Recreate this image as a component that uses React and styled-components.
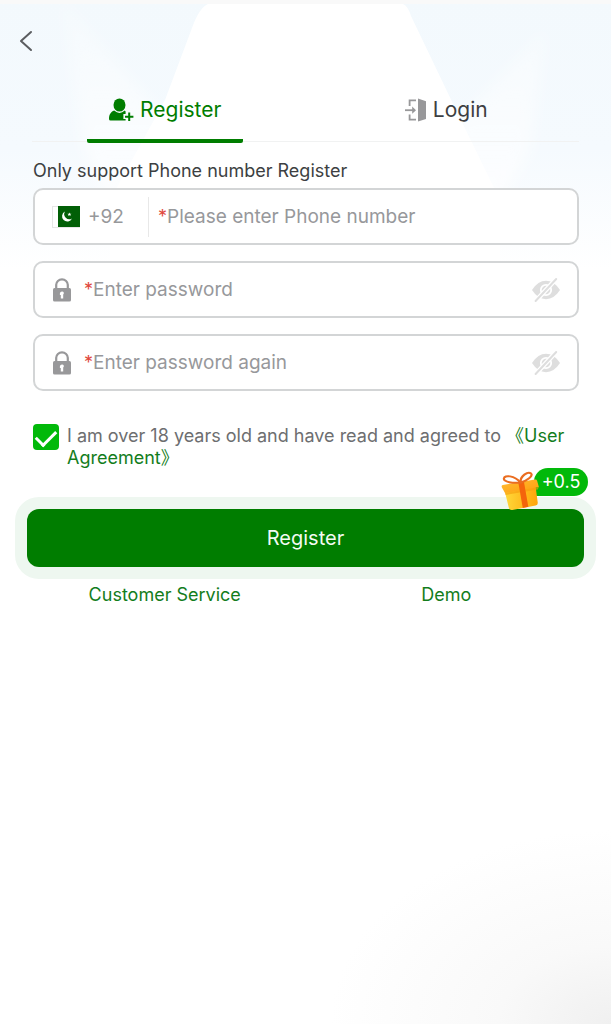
import React from 'react';
import styled, { createGlobalStyle } from 'styled-components';

const COLORS = {
  green: '#007d00',
  bright: '#02b90a',
  link: '#137d1c',
  text: '#3d3f42',
  muted: '#6d6e70',
  placeholder: '#97989b',
  icon: '#98989a',
  border: '#d3d5d6',
  star: '#e0483c',
};

const GlobalStyle = createGlobalStyle`
  * {
    box-sizing: border-box;
  }

  body {
    margin: 0;
    background: #fff;
    color: ${COLORS.text};
    font-family: Inter, 'Noto Sans CJK SC', sans-serif;
    font-size: 18px;
    line-height: 22px;
  }
`;

const App = () => {
  const [over18, setOver18] = React.useState(true);

  return (
    <Page>
      <GlobalStyle />
      <Backdrop />
      <Header>
        <BackButton type="button" aria-label="Back">
          <svg width="14" height="22" viewBox="0 0 14 22" fill="none">
            <path d="M12 2 2 11 12 20" stroke="#5b5d60" strokeWidth="2" strokeLinecap="round" strokeLinejoin="round" />
          </svg>
        </BackButton>
      </Header>
      <Tabs>
        <Tab type="button" $active>
          <UserPlusIcon />
          Register
        </Tab>
        <Tab type="button">
          <DoorIcon />
          Login
        </Tab>
      </Tabs>
      <Form onSubmit={(event) => event.preventDefault()}>
        <Hint>Only support Phone number Register</Hint>
        <Fields>
          <Field htmlFor="phone">
            <Country>
              <FlagIcon />
              +92
            </Country>
            <Star>*</Star>
            <Input id="phone" type="tel" aria-label="Phone number" placeholder="Please enter Phone number" />
          </Field>
          <PasswordField id="password" placeholder="Enter password" />
          <PasswordField id="password-again" placeholder="Enter password again" />
        </Fields>
        <Agreement>
          <Checkbox
            id="agree"
            type="checkbox"
            checked={over18}
            onChange={(event) => setOver18(event.target.checked)}
          />
          <AgreementText htmlFor="agree">
            I am over 18 years old and have read and agreed to <TextLink href="#agreement">《User Agreement》</TextLink>
          </AgreementText>
        </Agreement>
        <SubmitArea>
          <SubmitButton type="submit">Register</SubmitButton>
          <Bonus>
            <GiftIcon />
            <BonusAmount>+0.5</BonusAmount>
          </Bonus>
        </SubmitArea>
      </Form>
      <Links>
        <TextLink href="#service">Customer Service</TextLink>
        <TextLink href="#demo">Demo</TextLink>
      </Links>
    </Page>
  );
};

const PasswordField = ({ id, placeholder }) => {
  const [visible, setVisible] = React.useState(false);

  return (
    <Field htmlFor={id}>
      <LockIcon />
      <Star>*</Star>
      <Input id={id} type={visible ? 'text' : 'password'} aria-label={placeholder} placeholder={placeholder} />
      <EyeButton type="button" aria-label="Show password" onClick={() => setVisible(!visible)}>
        <EyeOffIcon />
      </EyeButton>
    </Field>
  );
};

const Backdrop = () => (
  <BackdropSvg viewBox="0 0 611 1024" preserveAspectRatio="none" aria-hidden="true">
    <defs>
      <linearGradient id="sky" x1="0" y1="0" x2="0" y2="1">
        <stop offset="0" stopColor="#f3f9fd" />
        <stop offset="0.55" stopColor="#f5fafe" />
        <stop offset="1" stopColor="#ffffff" />
      </linearGradient>
      <linearGradient id="beam" x1="0" y1="0" x2="0" y2="1">
        <stop offset="0" stopColor="#ffffff" stopOpacity="0.2" />
        <stop offset="1" stopColor="#ffffff" stopOpacity="0.9" />
      </linearGradient>
      <radialGradient id="corner" cx="1" cy="1" r="1">
        <stop offset="0" stopColor="#f0f0f0" />
        <stop offset="0.4" stopColor="#f9f9f9" />
        <stop offset="1" stopColor="#ffffff" />
      </radialGradient>
      <filter id="soft">
        <feGaussianBlur stdDeviation="7" />
      </filter>
    </defs>
    <rect width="611" height="270" fill="url(#sky)" />
    <rect y="830" x="330" width="281" height="194" fill="url(#corner)" />
    <path d="M62 0 84 150 160 290H450L530 150 545 30 470 110 400 160H200L140 90Z" fill="url(#beam)" filter="url(#soft)" />
    <path d="M208 4H403Q408 6 411 16L456 110 500 200V290H110V200L165 100 192 28Q199 8 208 4Z" fill="#fff" />
    <rect width="611" height="4" fill="#f9f9f9" />
  </BackdropSvg>
);

const UserPlusIcon = () => (
  <svg width="26" height="24" viewBox="0 0 26 24" fill="currentColor">
    <ellipse cx="11.5" cy="7" rx="6" ry="6.6" />
    <path d="M6.2 12.6Q11.5 17.2 16.8 12.6L17.6 13.4V16H15.4V21H17.6V22.6H2.6Q1 22.6 1 21C1 17 2.6 13.8 6.2 12.6Z" />
    <path d="M20.2 14.6H22.2V17.8H25.4V19.8H22.2V23H20.2V19.8H17V17.8H20.2Z" />
  </svg>
);

const DoorIcon = () => (
  <svg width="22" height="24" viewBox="0 0 22 24" fill="none">
    <path d="M11 2.4H4.6V8M4.6 16.4V21.6H11" stroke={COLORS.icon} strokeWidth="1.8" />
    <path d="M0 12.2H9" stroke={COLORS.icon} strokeWidth="1.8" />
    <path d="M7.2 8.6 11 12.2 7.2 15.8Z" fill={COLORS.icon} />
    <path d="M13 .5 21 3.2V21L13 23.5Z" fill={COLORS.icon} />
  </svg>
);

const FlagIcon = () => (
  <svg width="28" height="22" viewBox="0 0 28 22">
    <rect x=".5" y=".5" width="27" height="21" fill="#fff" stroke="#e6e6e6" />
    <rect x="6" width="22" height="21" fill="#015f06" />
    <path d="M13 5.6A5.2 5.2 0 1 0 20 12.4 5 5 0 0 1 13 5.6Z" fill="#fff" />
    <path d="m17.4 6.4.6 1.3 1.4.1-1.1.9.4 1.4-1.3-.8-1.2.8.3-1.4-1.1-.9 1.5-.1Z" fill="#fff" />
  </svg>
);

const LockIcon = () => (
  <svg width="20" height="24" viewBox="0 0 20 24" fill="none">
    <path d="M4.2 11V6.8A5.8 5.4 0 0 1 15.8 6.8V11" stroke={COLORS.icon} strokeWidth="2.2" />
    <rect x="1" y="10" width="18" height="13.5" rx="1.6" fill={COLORS.icon} />
    <path d="M10 13.4A1.8 1.8 0 0 1 11.2 16.6V20.6H8.8V17H7.9V15.200A2.1 2.1 0 0 1 10 13.4Z" fill="#fff" />
  </svg>
);

const EyeOffIcon = () => (
  <svg width="30" height="26" viewBox="0 0 30 26" fill="none">
    <path d="M1 13Q7 3.8 15 3.8T29 13Q23 22.2 15 22.2T1 13Z" fill="#dedede" />
    <circle cx="15" cy="13" r="5.2" stroke="#fff" strokeWidth="1.8" />
    <path d="M4.2 24.6 25.6 1.4" stroke="#fff" strokeWidth="4.6" />
    <path d="M4.6 24 25.2 2" stroke="#dedede" strokeWidth="2" strokeLinecap="round" />
  </svg>
);

const GiftIcon = () => (
  <GiftSvg width="40" height="40" viewBox="0 0 36 40" preserveAspectRatio="none" fill="none">
    <defs>
      <linearGradient id="box" x1="0" y1="0" x2="1" y2="0">
        <stop offset="0" stopColor="#ffd93a" />
        <stop offset="1" stopColor="#ffa408" />
      </linearGradient>
      <linearGradient id="lid" x1="0" y1="0" x2="1" y2="1">
        <stop offset="0" stopColor="#ffbd34" />
        <stop offset="1" stopColor="#ff9d0c" />
      </linearGradient>
    </defs>
    <path d="M4 19 32 15 34 32Q34 34 32 34.6L11 39Q8.5 39.3 8 37Z" fill="url(#box)" />
    <path d="M2.5 14 31.5 8.5Q33 8.3 33.4 9.8L35 16 4.5 22 1.5 16Q1.2 14.4 2.5 14Z" fill="url(#lid)" />
    <path d="M4.5 22 35 16 34 18.5 5 24Z" fill="#f79a0b" opacity=".6" />
    <path d="M16.5 11.5 21.5 10.5 25.5 35.8 20.5 37Z" fill="#f4640c" />
    <path d="M18.5 11.5C13 4.5 4 3.5 3.5 7.5 3 11 12 12.5 18.5 11.5Z" stroke="#ea6d20" strokeWidth="2" />
    <path d="M18.5 11.5C18 5 25 0 28 2.5 30 5 24.5 9.5 18.5 11.5Z" stroke="#ea6d20" strokeWidth="2" />
  </GiftSvg>
);

const Page = styled.main`
  position: relative;
  min-height: 100vh;
  isolation: isolate;
`;

const BackdropSvg = styled.svg`
  position: absolute;
  inset: 0;
  z-index: -1;
  width: 100%;
  height: 100%;
`;

const Header = styled.header`
  display: flex;
  align-items: flex-end;
  height: 80px;
  padding: 0 11px 20px;
`;

const BackButton = styled.button`
  display: flex;
  padding: 8px;
  border: 0;
  background: none;
  cursor: pointer;
`;

const Tabs = styled.nav`
  display: grid;
  grid-template-columns: 1fr 1fr;
  margin: 0 24px;
  background: linear-gradient(#f1f2f2, #f1f2f2) bottom 1px center / calc(100% - 16px) 1px no-repeat;
`;

const Tab = styled.button`
  display: flex;
  align-items: center;
  justify-content: center;
  justify-self: center;
  gap: 6px;
  width: 156px;
  height: 63px;
  padding: 0;
  border: 0;
  border-bottom: 4px solid ${({ $active }) => ($active ? COLORS.green : 'transparent')};
  border-radius: 2px;
  background: none;
  color: ${({ $active }) => ($active ? COLORS.green : COLORS.text)};
  font: inherit;
  font-size: 21px;
  cursor: pointer;
`;

const Form = styled.form`
  padding: 17px 32px 0 33px;
`;

const Hint = styled.p`
  margin: 0 0 6px;
`;

const Fields = styled.div`
  display: grid;
  gap: 16px;
`;

const Field = styled.label`
  display: flex;
  align-items: center;
  height: 57px;
  padding: 0 16px 0 17px;
  border: 2px solid ${COLORS.border};
  border-radius: 10px;
  background: #fff;
`;

const Country = styled.span`
  display: flex;
  align-items: center;
  gap: 8px;
  width: 97px;
  height: 40px;
  margin-right: 9px;
  border-right: 1px solid #e8e8e8;
  color: ${COLORS.placeholder};
  font-size: 19px;
`;

const Star = styled.span`
  color: ${COLORS.star};

  svg + & {
    margin-left: 12px;
  }
`;

const Input = styled.input`
  flex: 1;
  min-width: 0;
  padding: 0;
  border: 0;
  outline: 0;
  background: none;
  color: ${COLORS.text};
  font: inherit;
  font-size: 19px;

  &::placeholder {
    color: ${COLORS.placeholder};
    opacity: 1;
  }
`;

const EyeButton = styled.button`
  display: flex;
  padding: 0;
  border: 0;
  background: none;
  cursor: pointer;
`;

const Agreement = styled.div`
  display: flex;
  align-items: flex-start;
  gap: 8px;
  margin-top: 33px;
`;

const Checkbox = styled.input`
  appearance: none;
  display: grid;
  justify-items: center;
  flex: none;
  width: 26px;
  height: 26px;
  margin: 0;
  padding-top: 6px;
  border: 0;
  border-radius: 4px;
  background: #e4e5e6;

  &:checked {
    background: ${COLORS.bright};
  }

  &:checked::before {
    content: '';
    width: 17px;
    height: 9px;
    border: solid #fff;
    border-width: 0 0 3px 3px;
    transform: rotate(-45deg);
  }
`;

const AgreementText = styled.label`
  padding-top: 1px;
  color: ${COLORS.muted};
`;

const TextLink = styled.a`
  color: ${COLORS.link};
  text-decoration: none;
`;

const SubmitArea = styled.div`
  position: relative;
  margin: 40px -5px 0 -6px;
`;

const SubmitButton = styled.button`
  display: block;
  width: 100%;
  height: 58px;
  border: 0;
  border-radius: 12px;
  background: ${COLORS.green};
  box-shadow: 0 0 0 12px #eef7f0;
  color: #f2fbf2;
  font: inherit;
  font-size: 20px;
  cursor: pointer;
`;

const Bonus = styled.div`
  position: absolute;
  right: -4px;
  bottom: 56px;
  display: flex;
  align-items: flex-start;
`;

const GiftSvg = styled.svg`
  position: relative;
  margin: 3px -6px 0 0;
`;

const BonusAmount = styled.span`
  width: 54px;
  height: 28px;
  border-radius: 14px 14px 14px 0;
  background: ${COLORS.bright};
  color: #fff;
  line-height: 28px;
  text-align: center;
`;

const Links = styled.nav`
  display: grid;
  grid-template-columns: 1fr 1fr;
  justify-items: center;
  margin: 17px 24px;
`;

export default App;
